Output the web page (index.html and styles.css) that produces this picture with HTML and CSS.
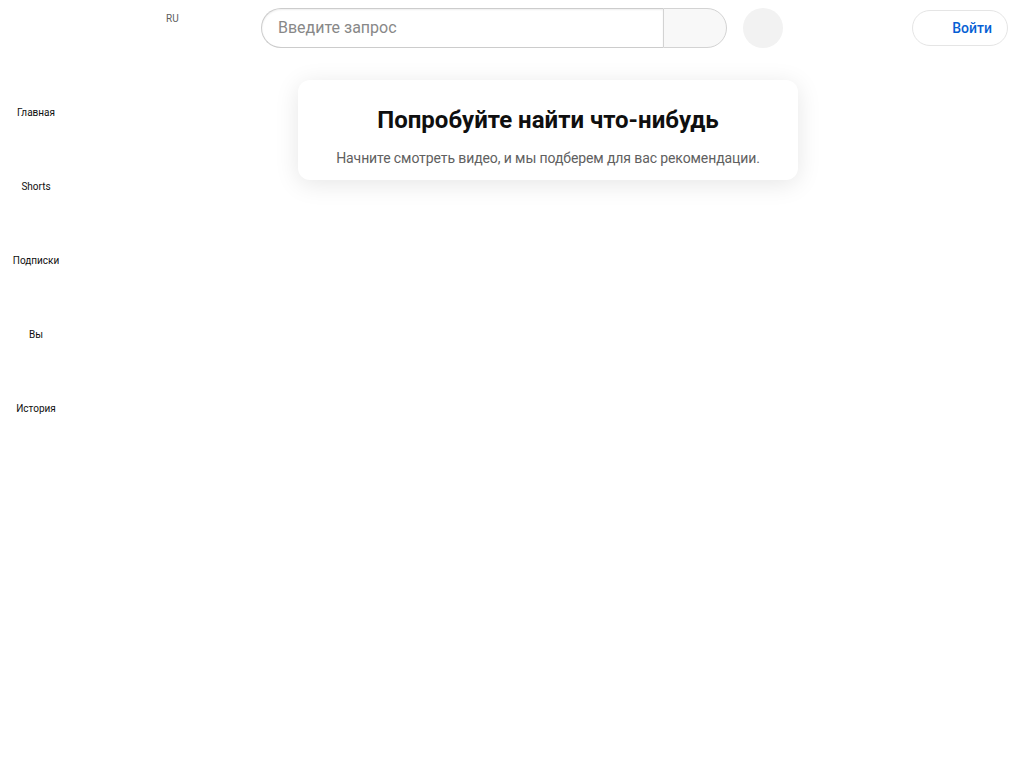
FILE: index.html
```html
<!DOCTYPE html>
<html lang="ru">
<head>
<meta charset="utf-8">
<title>YouTube</title>
<link rel="stylesheet" href="styles.css">
</head>
<body>
<header class="masthead">
  <div class="start">
    <span class="country">RU</span>
  </div>
  <div class="center">
    <form class="search">
      <input class="search-input" type="text" placeholder="Введите запрос">
      <button class="search-btn" type="button"></button>
    </form>
    <button class="mic" type="button"></button>
  </div>
  <div class="end">
    <button class="signin" type="button"><span class="signin-icon"></span>Войти</button>
  </div>
</header>
<div class="layout">
  <nav class="guide">
    <a class="guide-item"><span class="guide-icon"></span><span class="guide-label">Главная</span></a>
    <a class="guide-item"><span class="guide-icon"></span><span class="guide-label">Shorts</span></a>
    <a class="guide-item"><span class="guide-icon"></span><span class="guide-label">Подписки</span></a>
    <a class="guide-item"><span class="guide-icon"></span><span class="guide-label">Вы</span></a>
    <a class="guide-item"><span class="guide-icon"></span><span class="guide-label">История</span></a>
  </nav>
  <main class="content">
    <section class="card">
      <h1 class="card-title">Попробуйте найти что-нибудь</h1>
      <p class="card-text">Начните смотреть видео, и мы подберем для вас рекомендации.</p>
    </section>
  </main>
</div>
</body>
</html>
```

FILE: styles.css
```css
* { box-sizing: border-box; }
html, body {
  margin: 0;
  padding: 0;
  background: #fff;
  font-family: Roboto, "Noto Sans", Arial, sans-serif;
  color: #0f0f0f;
}
.masthead {
  height: 56px;
  display: flex;
  align-items: center;
  padding: 0 16px;
}
.start {
  width: 245px;
  align-self: flex-start;
  padding-top: 11px;
  padding-left: 150px;
  line-height: 12px;
}
.country {
  font-size: 10px;
  line-height: 12px;
  color: #606060;
}
.center {
  display: flex;
  align-items: center;
}
.search {
  display: flex;
  margin: 0;
}
.search-input {
  width: 402px;
  height: 40px;
  border: 1px solid #ccc;
  border-right: none;
  border-radius: 40px 0 0 40px;
  padding: 0 4px 2px 16px;
  font-family: inherit;
  font-size: 16px;
  color: #0f0f0f;
  outline: none;
  box-shadow: inset 0 1px 2px #eee;
}
.search-input::placeholder { color: #888; }
.search-btn {
  width: 64px;
  height: 40px;
  border: 1px solid #d3d3d3;
  border-radius: 0 40px 40px 0;
  background: #f8f8f8;
  padding: 0;
}
.mic {
  width: 40px;
  height: 40px;
  margin-left: 16px;
  border: none;
  border-radius: 50%;
  background: #f2f2f2;
  padding: 0;
}
.end {
  flex: 1;
  display: flex;
  justify-content: flex-end;
}
.signin {
  display: flex;
  align-items: center;
  height: 36px;
  padding: 0 15px;
  border: 1px solid #e5e5e5;
  border-radius: 18px;
  background: #fff;
  color: #065fd4;
  font-family: inherit;
  font-size: 14px;
  font-weight: 500;
}
.signin-icon {
  width: 24px;
  height: 24px;
}
.layout {
  display: flex;
}
.guide {
  width: 72px;
  padding-top: 4px;
  display: flex;
  flex-direction: column;
}
.guide-item {
  display: flex;
  flex-direction: column;
  align-items: center;
  padding: 16px 0 14px;
  color: #0f0f0f;
}
.guide-icon {
  width: 24px;
  height: 24px;
  margin-bottom: 6px;
}
.guide-label {
  font-size: 10px;
  line-height: 14px;
}
.content {
  flex: 1;
  display: flex;
  justify-content: center;
  padding-top: 24px;
}
.card {
  width: 500px;
  height: 100px;
  background: #fff;
  border-radius: 12px;
  box-shadow: 0 4px 24px rgba(0,0,0,0.1);
  padding: 24px 16px 12px;
  text-align: center;
}
.card-title {
  margin: 0;
  font-size: 24px;
  line-height: 32px;
  font-weight: 700;
  color: #0f0f0f;
}
.card-text {
  margin: 12px 0 0;
  font-size: 14px;
  line-height: 20px;
  letter-spacing: -0.1px;
  color: #606060;
}
```
